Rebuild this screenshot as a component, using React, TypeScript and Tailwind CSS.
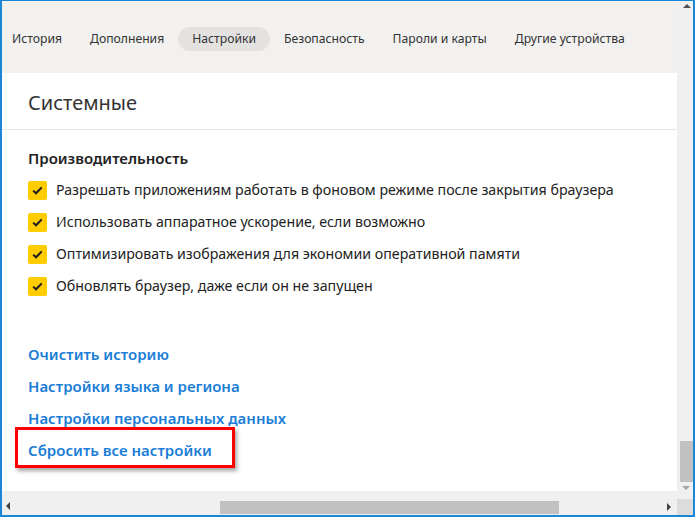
import React from "react";

const tabs = ["История", "Дополнения", "Настройки", "Безопасность", "Пароли и карты", "Другие устройства"];
const checks = [
  "Разрешать приложениям работать в фоновом режиме после закрытия браузера",
  "Использовать аппаратное ускорение, если возможно",
  "Оптимизировать изображения для экономии оперативной памяти",
  "Обновлять браузер, даже если он не запущен",
];
const links = ["Очистить историю", "Настройки языка и региона", "Настройки персональных данных"];

function Check() {
  return (
    <div className="w-[19px] h-[19px] bg-[#ffcc00] rounded-[2px] flex items-center justify-center shrink-0">
      <svg width="11" height="9" viewBox="0 0 11 9">
        <path d="M1.2 4.6 L4 7.3 L9.8 1.4" fill="none" stroke="#1a1a1a" strokeWidth="2" />
      </svg>
    </div>
  );
}

export default function App() {
  return (
    <div
      className="w-[695px] h-[517px] border-[#1a86d8] border-t border-l-2 border-r-2 border-b-2 flex flex-col bg-[#f0f0f0] overflow-hidden"
      style={{ fontFamily: '"Noto Sans", "Open Sans", sans-serif' }}
    >
      <div className="flex h-[490px]">
        <div className="w-[675px] flex flex-col">
          <div className="h-[72px] bg-[#f2f1f0] pt-[26px] -ml-[4px] flex items-start">
            {tabs.map((t, i) => (
              <div
                key={t}
                className={`h-[24px] px-[14px] flex items-center text-[12.2px] text-[#333] rounded-full whitespace-nowrap shrink-0 ${
                  i === 2 ? "bg-[#e3e2e1]" : ""
                }`}
              >
                {t}
              </div>
            ))}
          </div>
          <div className="flex-1 bg-white flex flex-col">
            <div className="pl-[26px] pt-[17px] pb-[13px] text-[20px] leading-[26px] text-[#333]">Системные</div>
            <div className="h-px bg-[#e6e6e6]" />
            <div className="pl-[26px] flex flex-col">
              <div className="mt-[18px] text-[15px] leading-[20px] font-semibold text-[#222]">Производительность</div>
              <div className="mt-[6px] flex flex-col">
                {checks.map((c) => (
                  <div key={c} className="h-[32px] flex items-center gap-[9px]">
                    <Check />
                    <span className="text-[14.2px] text-[#222] whitespace-nowrap">{c}</span>
                  </div>
                ))}
              </div>
              <div className="mt-[36px] flex flex-col">
                {links.map((l) => (
                  <div key={l} className="h-[32px] flex items-center text-[15px] font-semibold text-[#1a7dd6]">
                    {l}
                  </div>
                ))}
                <div className="h-[32px] flex items-center">
                  <div className="relative text-[15px] font-semibold text-[#1a7dd6]">
                    Сбросить все настройки
                    <div className="absolute -left-[13px] -right-[23px] -top-[12px] -bottom-[7px] border-[3px] border-[#ff0000] shadow-[2px_3px_4px_rgba(0,0,0,0.35)]" />
                  </div>
                </div>
              </div>
            </div>
          </div>
        </div>
        <div className="w-[16px] flex flex-col items-center">
          <div className="mt-[3px] ml-[4px] w-0 h-0 border-l-[4px] border-r-[4px] border-b-[4px] border-l-transparent border-r-transparent border-b-[#505050]" />
          <div className="mt-auto ml-[2px] w-[13px] h-[41px] bg-[#c1c1c1]" />
          <div className="mt-[4px] mb-[1px] ml-[2px] w-0 h-0 border-l-[4px] border-r-[4px] border-t-[4px] border-l-transparent border-r-transparent border-t-[#a6a6a6]" />
        </div>
      </div>
      <div className="h-[24px] flex">
        <div className="w-[675px] relative flex items-end pb-[1px]">
          <div className="absolute left-[4px] top-[11px] w-0 h-0 border-t-[4px] border-b-[4px] border-r-[4px] border-t-transparent border-b-transparent border-r-[#404040]" />
          <div className="ml-[218px] w-[339px] h-[13px] bg-[#c1c1c1]" />
          <div className="absolute left-[665px] top-[12px] w-0 h-0 border-t-[4px] border-b-[4px] border-l-[4px] border-t-transparent border-b-transparent border-l-[#404040]" />
        </div>
        <div className="w-[16px] flex flex-col">
          <div className="h-[8px]" />
          <div className="flex-1 bg-[#dcdcdc]" />
        </div>
      </div>
    </div>
  );
}
